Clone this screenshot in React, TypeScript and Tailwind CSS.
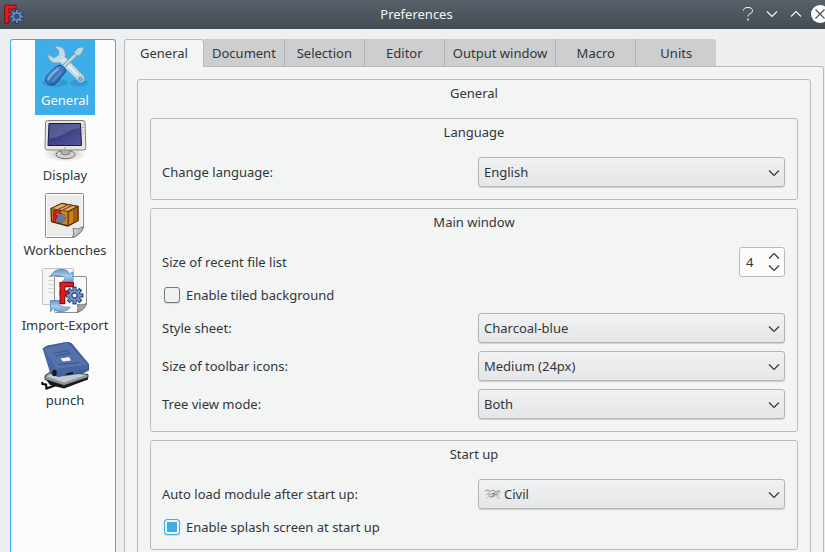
import React, { useId, useState } from "react";

function Gear({ fill = "#6f95d2", stroke = "#1d3566", hole = "#f2f5fa" }: { fill?: string; stroke?: string; hole?: string }) {
  const angles = [0, 45, 90, 135, 180, 225, 270, 315];
  return (
    <g>
      {angles.map((a) => (
        <rect key={a} x="-1.700" y="-9.500" width="3.4" height="5" fill={fill} stroke={stroke} strokeWidth="1.2" transform={`rotate(${a})`} />
      ))}
      <circle r="6.500" fill={fill} stroke={stroke} strokeWidth="1" />
      {angles.map((a) => (
        <rect key={a} x="-1.200" y="-8.400" width="2.4" height="3.5" fill={fill} transform={`rotate(${a})`} />
      ))}
      <circle r="3" fill={hole} stroke={stroke} strokeWidth="1.2" />
    </g>
  );
}

function LogoBars() {
  return (
    <g>
      <g fill="#6e0508" stroke="#6e0508" strokeWidth="2.200" strokeLinejoin="round">
        <rect x="1" y="1" width="5" height="26" />
        <rect x="1" y="1" width="16" height="4.500" />
        <rect x="1" y="12" width="12" height="4.500" />
      </g>
      <g fill="#e6191f">
        <rect x="1" y="1" width="5" height="26" />
        <rect x="1" y="1" width="16" height="4.500" />
        <rect x="1" y="12" width="12" height="4.500" />
      </g>
    </g>
  );
}

function AppLogo() {
  return (
    <svg viewBox="0 0 20 20" className="size-5" aria-hidden="true">
      <g transform="translate(.5 .9) scale(.66)">
        <LogoBars />
      </g>
      <g transform="translate(12.800 12.500) scale(.74)">
        <Gear fill="#668dc6" stroke="#1f3868" hole="#4a5560" />
      </g>
    </svg>
  );
}

function ToolsIcon() {
  return (
    <svg viewBox="0 0 48 48" className="size-12" aria-hidden="true">
      <defs>
        <linearGradient id="steel" x1="0" y1="0" x2="1" y2="1">
          <stop offset="0" stopColor="#b0cfde" />
          <stop offset=".5" stopColor="#d0e3ec" />
          <stop offset="1" stopColor="#a9cbdc" />
        </linearGradient>
        <linearGradient id="handle" x1="0" y1="0" x2="1" y2="1">
          <stop offset="0" stopColor="#82b5e6" />
          <stop offset=".5" stopColor="#3f79bd" />
          <stop offset="1" stopColor="#204e93" />
        </linearGradient>
      </defs>
      <ellipse cx="14" cy="41" rx="13" ry="4" fill="#2587c0" opacity=".5" />
      <ellipse cx="38" cy="41" rx="9" ry="3.500" fill="#2587c0" opacity=".5" />
      <g transform="translate(1 1)">
        <path
          d="M12.500 3.500C17 1.800 23 5 23.300 10.500C23.400 12 23 13.500 23 13.500L41.800 32.800C44.500 35.800 41.500 41 37 39.200L17.800 19.400C12 21.500 5.800 18 5.600 11.200L12.300 14.800L16.800 11.800L16.300 7.200Z"
          fill="url(#steel)"
          stroke="#71a2bb"
          strokeLinejoin="round"
        />
        <path d="M21 17L36 32.500" stroke="#e3eff4" strokeWidth="2" />
        <circle cx="38.500" cy="36" r="1.700" fill="#89b8cf" stroke="#6898b0" />
        <path d="M22 23L35 10.500" stroke="#79a5bc" strokeWidth="4.200" />
        <path d="M22 23L35 10.500" stroke="#c5dce7" strokeWidth="2.200" />
        <path d="M32 9.500L35.500 5L41 3.600L41.500 6.500L39 11.500L35 13.200Z" fill="#bdd8e5" stroke="#719fb7" strokeLinejoin="round" />
        <path
          d="M14.500 23.500Q17 21.500 19.500 22.500L23 25.500Q24.500 28 22.500 30L14 40.500Q10 43.500 6 41Q2 38.500 4 34.500Q6 30.500 14.500 23.500Z"
          fill="url(#handle)"
          stroke="#1d4784"
        />
        <path d="M16 26Q9 31 6.500 36" fill="none" stroke="#acd0ee" strokeWidth="2" strokeLinecap="round" opacity=".6" />
        <path d="M19 29L11 38" fill="none" stroke="#5f94cc" strokeWidth="1.500" strokeLinecap="round" />
      </g>
    </svg>
  );
}

function MonitorIcon() {
  return (
    <svg viewBox="0 0 48 48" className="size-12" aria-hidden="true">
      <defs>
        <radialGradient id="monShadow">
          <stop offset="0" stopColor="#777" stopOpacity=".6" />
          <stop offset="1" stopColor="#999" stopOpacity="0" />
        </radialGradient>
        <linearGradient id="screen" x1="0" y1="0" x2="1" y2="1">
          <stop offset="0" stopColor="#2a2d66" />
          <stop offset="1" stopColor="#5558a3" />
        </linearGradient>
      </defs>
      <g transform="translate(0 1)">
        <ellipse cx="24" cy="36" rx="22" ry="8" fill="url(#monShadow)" />
        <ellipse cx="24.500" cy="36.500" rx="9.500" ry="4.200" fill="#d5d6d1" stroke="#70716c" />
        <path d="M19.500 31H29.500L28.500 36Q24.500 38 20.500 36Z" fill="#b4b5b1" stroke="#7b7c77" />
        <path d="M6.500 2.500H42Q44 2.500 44 4.500L44.800 29.500Q44.800 32 42.500 32H6.500Q4 32 4 29.500L4.500 4.500Q4.500 2.500 6.500 2.500Z" fill="#e5e6e1" stroke="#7f807b" />
        <path d="M8 5.500H39.500L40.500 27.500H7Z" fill="url(#screen)" stroke="#171a4d" />
        <path d="M8.500 6H39L39 10Q30 11 23 16Q15 20 8 20.500Z" fill="#8083b5" opacity=".45" />
        <path d="M42 6V17" stroke="#989994" strokeDasharray="1 2" />
        <circle cx="24" cy="30" r=".8" fill="#93948f" />
      </g>
    </svg>
  );
}

function WorkbenchIcon() {
  return (
    <svg viewBox="0 0 48 48" className="size-12" aria-hidden="true">
      <defs>
        <linearGradient id="fold" x1="0" y1="0" x2="1" y2="1">
          <stop offset="0" stopColor="#fbfbf8" />
          <stop offset=".7" stopColor="#a4a5a0" />
        </linearGradient>
      </defs>
      <g transform="translate(0 1)">
        <path d="M4.500 1.500Q4.500 .5 5.500 .5H41.500Q42.500 .5 42.500 1.500V35L33 44.500H5.500Q4.500 44.500 4.500 43.500Z" fill="#ebecea" stroke="#8a8b86" />
        <path d="M5.500 1.500H41.500V34L32 43.500H5.500Z" fill="none" stroke="#fff" />
        <path d="M31.500 44.500Q34 40 32 35.500Q37 37.500 42.500 33.500Q42 38 38 41Q35 43.800 31.500 44.500Z" fill="url(#fold)" stroke="#777873" />
        <path d="M10 15.500L20.500 10.500L37 13.500L37 27.500L27 33L10.500 28.500Z" fill="#c9882f" stroke="#4d2c0a" strokeWidth="1.300" strokeLinejoin="round" />
        <path d="M10 15.500L20.500 10.500L37 13.500L27 18.500Z" fill="#e1b065" stroke="#6a3b10" />
        <path d="M27 18.500L37 13.500V27.500L27 33Z" fill="#a65f0e" stroke="#4d2c0a" />
        <path d="M17 16.500L27 11.800M21 17.500L31 12.500" stroke="#7b4917" strokeWidth="1.200" />
        <path d="M28 20L32 17.500V29L28 31.500Z" fill="#cc8118" />
        <g transform="translate(12 17.500) scale(.44)">
          <LogoBars />
        </g>
        <g transform="translate(20 25) scale(.48)">
          <Gear hole="#d89a3d" />
        </g>
      </g>
    </svg>
  );
}

function ImportExportIcon() {
  return (
    <svg viewBox="0 0 48 48" className="size-12" aria-hidden="true">
      <defs>
        <linearGradient id="arrow" x1="0" y1="0" x2="0" y2="1">
          <stop offset="0" stopColor="#5f97ce" />
          <stop offset=".5" stopColor="#a9cbed" />
          <stop offset="1" stopColor="#6b9fd4" />
        </linearGradient>
      </defs>
      <rect x="1.500" y="1.500" width="31" height="36" rx="1" fill="#f4f4f2" stroke="#c1c2bf" />
      <path d="M7 9.500H24M7 13.500H24M7 17.500H20M7 21.500H20M7 25.500H20" stroke="#d7d8d5" />
      <path d="M14.500 9.500H44Q45.500 9.500 45.500 11V37L37 45.500H14.500Q13.500 45.500 13.500 44.500V10.500Q13.500 9.500 14.500 9.500Z" fill="#f9f9f8" stroke="#8c8d88" />
      <path d="M36 45.500Q38 41 36.500 37.500Q41 39 45.500 36.500Q44 43 36 45.500Z" fill="#a6a7a2" stroke="#72736e" />
      <path d="M9 9.500Q14 1 23 2.500Q27 3.300 28.500 7L32 5V15H20.500L24.500 11.500Q20 6.500 9 9.500Z" fill="url(#arrow)" stroke="#5288bf" strokeWidth=".8" strokeLinejoin="round" />
      <path d="M29.500 40Q25 45.500 18 44.500Q14 44 12.500 41.500L9.500 44.500V33.500H21L17.500 37.500Q22 41 29.500 40Z" fill="url(#arrow)" stroke="#5288bf" strokeWidth=".8" strokeLinejoin="round" />
      <g transform="translate(18.700 15) scale(.79)">
        <LogoBars />
      </g>
      <g transform="translate(33.500 28.500) scale(.88)">
        <Gear />
      </g>
    </svg>
  );
}

function PunchIcon() {
  return (
    <svg viewBox="0 0 48 48" className="size-12" aria-hidden="true">
      <path d="M4 36L23 43.500L47 34.500V37.500L23 46.500L9 43Z" fill="#17191c" />
      <path d="M4 33.500L12 28L47 32.500V35.500L23 43.500L4 37.500Z" fill="#8f969d" stroke="#1b1e22" strokeWidth=".8" strokeLinejoin="round" />
      <path d="M6 34.500L14 29L45 33L23 40.500Z" fill="#c3cacf" />
      <path d="M1 40L1.500 42L5 42.500L5.500 46.500L14 43.500" fill="none" stroke="#0c0c0c" strokeWidth="2.200" />
      <path d="M2 6.500L6 4L27 0L30.500 1.500L48 22.500V28L42 31L17 34.500L10 32L7.500 24Z" fill="#3f5f9b" stroke="#2f4c83" strokeWidth=".7" strokeLinejoin="round" />
      <path d="M2.500 6.500L27 .8L47 23L15 27Z" fill="#5573aa" />
      <path d="M2.500 6.500L7.500 24L10.500 31.500L16.500 33.500L15 26.500Z" fill="#4a69a3" />
      <path d="M13 11.500L28 8.500M15 14L30 11M17 22.500L38 20.500" stroke="#2f4c83" strokeWidth=".9" />
      <path d="M19.500 16.500L28 15L30 18.500L22 19.500Z" fill="#f3f5f8" />
      <path d="M15 27L47 23V27L17 33.500Z" fill="#4765a0" />
      <ellipse cx="13.500" cy="31" rx="2.300" ry="3.200" fill="#17191d" />
      <path d="M25 31.500L32 30V32L26 33Z" fill="#111" />
    </svg>
  );
}

function CivilIcon() {
  return (
    <svg viewBox="0 0 16 16" className="size-4" aria-hidden="true">
      <path d="M2 6L7 4.500L11 6L14 4L15 7L13 12L6 12.500L3 10Z" fill="#d3d3cc" />
      <path d="M0 5Q3 3 5.500 5.500L8 4L11 6L14 4.500L15.500 6" fill="none" stroke="#91918b" />
      <path d="M1 9L4.500 7.500L3.500 11L1 12M13 6L12 12H15.500" fill="none" stroke="#b8b4aa" strokeWidth=".8" />
      <path d="M6 8L10 7L8 9.500L12 8M5 11L9 10.500" fill="none" stroke="#747874" strokeWidth=".8" />
      <path d="M5 6.500L9 6M7 12L12 11" stroke="#f8f8f4" />
    </svg>
  );
}

function Chevron({ up = false }: { up?: boolean }) {
  return (
    <svg viewBox="0 0 12 8" className="h-2 w-3" fill="none" stroke="currentColor" strokeWidth="1.2" aria-hidden="true">
      <path d={up ? "M1 6.500L6 1.500L11 6.500" : "M1 1.500L6 6.500L11 1.500"} />
    </svg>
  );
}

function TitleBar() {
  return (
    <header className="grid h-[29px] shrink-0 grid-cols-[1fr_auto_1fr] items-center bg-linear-to-b from-[#576169] to-[#444c54] pb-px pl-1 text-[#f5f6f7]">
      <AppLogo />
      <h1 className="pl-1">Preferences</h1>
      <div className="-mr-1 flex items-center justify-end gap-1.5">
        <button type="button" aria-label="Help" className="flex size-[18px] items-center justify-center">
          <svg viewBox="0 0 12 16" className="h-4 w-3" fill="none" stroke="currentColor" aria-hidden="true">
            <path d="M1.500 4.500Q1.500 1.500 6 1.500T10.500 4.800Q10.500 7 7.500 8Q6 8.700 6 10.500" />
            <circle cx="6" cy="13.500" r=".9" fill="currentColor" stroke="none" />
          </svg>
        </button>
        <button type="button" aria-label="Minimize" className="flex size-[18px] items-center justify-center">
          <Chevron />
        </button>
        <button type="button" aria-label="Maximize" className="flex size-[18px] items-center justify-center">
          <Chevron up />
        </button>
        <button type="button" aria-label="Close" className="flex size-[18px] items-center justify-center rounded-full bg-[#fcfcfc] text-[#4a525a]">
          <svg viewBox="0 0 10 10" className="size-2.5" stroke="currentColor" strokeWidth="1.2" aria-hidden="true">
            <path d="M.5.5L9.500 9.500M9.500.5L.5 9.500" />
          </svg>
        </button>
      </div>
    </header>
  );
}

const categories = [
  { name: "General", Icon: ToolsIcon },
  { name: "Display", Icon: MonitorIcon },
  { name: "Workbenches", Icon: WorkbenchIcon },
  { name: "Import-Export", Icon: ImportExportIcon },
  { name: "punch", Icon: PunchIcon },
];

function Sidebar() {
  const [current, setCurrent] = useState("General");
  return (
    <nav aria-label="Categories" className="flex w-[106px] shrink-0 flex-col items-center rounded-t-[3px] border border-b-0 border-[#3daee9] bg-[#fcfcfc] pl-1">
      {categories.map(({ name, Icon }) => (
        <button
          key={name}
          type="button"
          onClick={() => setCurrent(name)}
          className={`flex h-[75px] shrink-0 flex-col items-center gap-px px-1.5 pt-0.5 ${current === name ? "bg-[#3daee9] text-[#fcfcfc]" : ""}`}
        >
          <Icon />
          <span className="whitespace-nowrap">{name}</span>
        </button>
      ))}
    </nav>
  );
}

const tabs = ["General", "Document", "Selection", "Editor", "Output window", "Macro", "Units"];

function TabBar() {
  const [current, setCurrent] = useState("General");
  return (
    <div role="tablist" className="-mb-px flex">
      {tabs.map((tab) => (
        <button
          key={tab}
          type="button"
          role="tab"
          aria-selected={current === tab}
          onClick={() => setCurrent(tab)}
          className={`h-7 min-w-20 border-r px-2 whitespace-nowrap last:rounded-tr-[3px] last:border-r-0 ${
            current === tab
              ? "z-10 rounded-t-[3px] border-t border-l border-[#b9bbbc] bg-[#f3f5f4] pb-0.5"
              : "border-b border-[#b3b5b7] bg-[#cccecf] pt-px"
          }`}
        >
          {tab}
        </button>
      ))}
    </div>
  );
}

function Group({ title, children }: { title: string; children: React.ReactNode }) {
  return (
    <section className="rounded-[3px] border border-[#babcbc] px-3 pb-3">
      <h2 className="h-[38px] pt-1 text-center">{title}</h2>
      <div className="flex flex-col gap-2">{children}</div>
    </section>
  );
}

function SelectRow({ label, options, icon }: { label: string; options: string[]; icon?: React.ReactNode }) {
  const id = useId();
  return (
    <div className="grid grid-cols-2 items-center gap-2">
      <label htmlFor={id} className="-ml-px">{label}</label>
      <div className="relative">
        <select
          id={id}
          className={`block h-[30px] w-full appearance-none rounded-[3px] border border-[#b2b4b6] bg-linear-to-b from-[#f0f1f2] to-[#e5e6e8] pr-7 shadow-[0_1px_1px_#00000026] ${icon ? "pl-[25px]" : "pl-[5px]"}`}
        >
          {options.map((option) => (
            <option key={option}>{option}</option>
          ))}
        </select>
        {icon && <span className="pointer-events-none absolute top-[7px] left-[7px]">{icon}</span>}
        <span className="pointer-events-none absolute top-3 right-[5px]">
          <Chevron />
        </span>
      </div>
    </div>
  );
}

function SpinRow({ label, initial }: { label: string; initial: number }) {
  const id = useId();
  const [value, setValue] = useState(initial);
  return (
    <div className="flex items-center justify-between">
      <label htmlFor={id} className="-ml-px">{label}</label>
      <div className="flex h-[30px] w-[46px] rounded-[3px] border border-[#b9bbbc] bg-[#fcfcfc]">
        <input
          id={id}
          type="text"
          inputMode="numeric"
          value={value}
          onChange={(e) => setValue(Number(e.target.value) || 0)}
          className="w-7 bg-transparent pl-1.5 outline-none"
        />
        <div className="flex flex-col justify-center gap-1">
          <button type="button" aria-label="Increase" onClick={() => setValue(value + 1)}>
            <Chevron up />
          </button>
          <button type="button" aria-label="Decrease" onClick={() => setValue(Math.max(0, value - 1))}>
            <Chevron />
          </button>
        </div>
      </div>
    </div>
  );
}

function CheckRow({ label, checked = false }: { label: string; checked?: boolean }) {
  return (
    <label className="flex h-5 items-center gap-1.5 self-start pl-px">
      <input
        type="checkbox"
        defaultChecked={checked}
        className="size-4 appearance-none rounded-[3px] border border-[#76797c] bg-[#eff0f1] shadow-[0_1px_1px_#00000020] checked:border-[#3daee9] checked:bg-[#3daee9] checked:inset-ring-2 checked:inset-ring-[#f3f5f4]"
      />
      {label}
    </label>
  );
}

export default function App() {
  return (
    <div className="flex h-screen flex-col overflow-hidden bg-[#eeeff1] font-['Noto_Sans',sans-serif] text-[13px] leading-[18px] text-[#31363b]">
      <TitleBar />
      <main className="flex min-h-0 grow gap-2 pt-2.5 pr-px pl-2.5">
        <Sidebar />
        <div className="flex min-w-0 grow flex-col">
          <TabBar />
          <div role="tabpanel" className="grow rounded-tr-[3px] border border-b-0 border-[#babcbc] bg-[#f3f5f4] p-3">
            <Group title="General">
              <Group title="Language">
                <SelectRow label="Change language:" options={["English"]} />
              </Group>
              <Group title="Main window">
                <SpinRow label="Size of recent file list" initial={4} />
                <CheckRow label="Enable tiled background" />
                <SelectRow label="Style sheet:" options={["Charcoal-blue"]} />
                <SelectRow label="Size of toolbar icons:" options={["Medium (24px)"]} />
                <SelectRow label="Tree view mode:" options={["Both"]} />
              </Group>
              <Group title="Start up">
                <SelectRow label="Auto load module after start up:" options={["Civil"]} icon={<CivilIcon />} />
                <CheckRow label="Enable splash screen at start up" checked />
              </Group>
            </Group>
          </div>
        </div>
      </main>
    </div>
  );
}
